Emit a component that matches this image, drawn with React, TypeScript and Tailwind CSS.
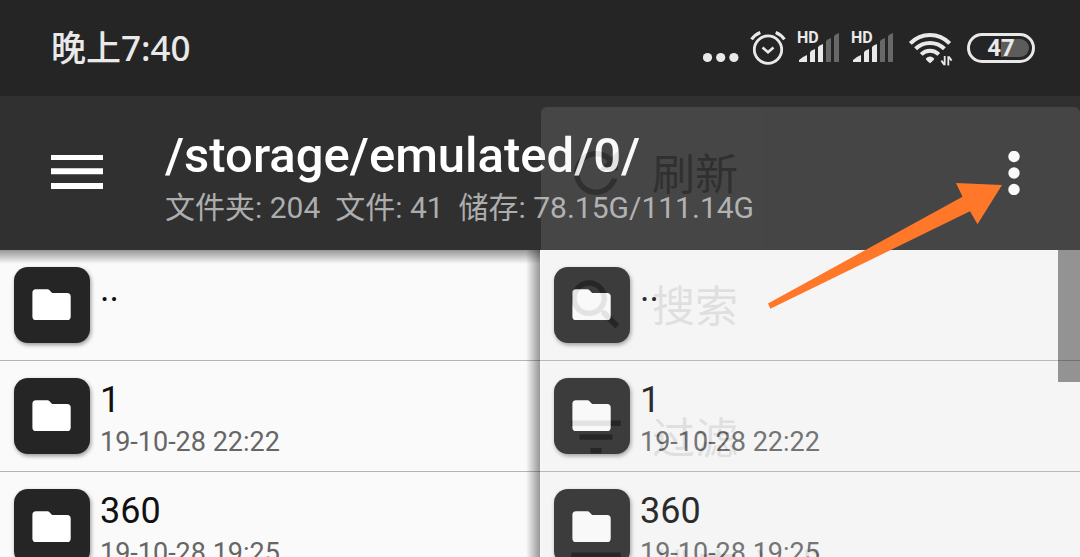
import { useState } from "react";

type FileEntry = {
  name: string;
  date?: string;
};

const entries: FileEntry[] = [
  { name: ".." },
  { name: "1", date: "19-10-28 22:22" },
  { name: "360", date: "19-10-28 19:25" },
];

const menuItems = [
  {
    title: "刷新",
    path: "M17.65 6.35C16.2 4.9 14.21 4 12 4c-4.42 0-7.99 3.58-7.99 8s3.57 8 7.99 8c3.73 0 6.84-2.55 7.73-6h-2.08c-.82 2.33-3.04 4-5.65 4-3.31 0-6-2.69-6-6s2.69-6 6-6c1.66 0 3.14.69 4.22 1.78L13 11h7V4l-2.35 2.35z",
  },
  {
    title: "搜索",
    path: "M15.5 14h-.79l-.28-.27C15.41 12.59 16 11.11 16 9.5 16 5.91 13.09 3 9.5 3S3 5.91 3 9.5 5.91 16 9.5 16c1.61 0 3.09-.59 4.23-1.57l.27.28v.79l5 4.99L20.49 19l-4.99-5zm-6 0C7.01 14 5 11.99 5 9.5S7.01 5 9.5 5 14 7.01 14 9.5 11.99 14 9.5 14z",
  },
  {
    title: "过滤",
    path: "M10 18h4v-2h-4v2zM3 6v2h18V6H3zm3 7h12v-2H6v2z",
  },
  {
    title: "排序方式",
    path: "M3 18h6v-2H3v2zM3 6v2h18V6H3zm0 7h12v-2H3v2z",
  },
];

function SignalIcon() {
  return (
    <div className="relative h-9 w-[43px]">
      <svg className="h-9 w-[43px]" viewBox="0 0 43 36" aria-hidden="true">
        <g fill="#e9e9e9">
          <path d="M2 32v-2q3-3 8-5v7z" />
          <path d="M13 32v-10q2-2 5-3v13z" />
          <path d="M21 32v-15q2-2 5-3v18z" />
        </g>
        <g fill="#686868">
          <path d="M29 32v-21q2-2 5-3v24z" />
          <path d="M37 32v-26q2-2 5-3v29z" />
        </g>
      </svg>
      <span className="absolute top-0 left-0 text-base leading-4 font-bold">
        HD
      </span>
    </div>
  );
}

function StatusBar() {
  return (
    <div className="flex h-24 items-center justify-between bg-[#252525] pr-[45px] pl-[51px] text-[#e9e9e9]">
      <p className="font-['Noto_Sans','Noto_Sans_CJK_SC',sans-serif] text-[35px] leading-10 font-medium">
        晚上7:40
      </p>
      <div className="flex items-center gap-[11px]">
        <svg className="h-9 w-9" viewBox="0 0 36 36" fill="currentColor" aria-hidden="true">
          <circle cx="4.5" cy="27.5" r="4.6" />
          <circle cx="17.7" cy="27.5" r="4.6" />
          <circle cx="30.9" cy="27.5" r="4.6" />
        </svg>
        <svg
          className="h-9 w-9"
          viewBox="0 0 36 36"
          fill="none"
          stroke="currentColor"
          strokeWidth="2.8"
          aria-hidden="true"
        >
          <circle cx="18" cy="19.6" r="13.7" />
          <path d="M12.5 17.5l5.5 4.8 5.5-4.8" strokeWidth="2.6" />
          <path d="M1.6 9.4Q5 4.4 10.3 2.4M34.4 9.4Q31 4.4 25.7 2.4" strokeWidth="3.2" />
        </svg>
        <SignalIcon />
        <SignalIcon />
        <svg className="h-9 w-[51px]" viewBox="0 0 51 36" fill="none" aria-hidden="true">
          <g stroke="currentColor" strokeWidth="4">
            <path d="M5.3 13.3Q13.5 4.9 25 4.9T44.7 13.3" />
            <path d="M10.6 18.8Q16.6 12.9 25 12.9T39.4 18.8" />
            <path d="M16.2 24.4Q20 20.7 25 20.7T33.8 24.4" />
          </g>
          <path
            d="M20.8 28.4q4.2-3.6 8.4 0q0 1.6-4.2 4.8q-4.2-3.2-4.2-4.8z"
            fill="currentColor"
          />
          <path
            d="M39.7 26v9.2M39.3 34.6l-2.9-4M43.3 35.4v-9.2M43.7 26.6l2.9 4"
            stroke="currentColor"
            strokeWidth="1.8"
          />
        </svg>
        <div className="relative flex h-[30px] w-[68px] items-center justify-center rounded-full border-3 border-[#e9e9e9]">
          <div className="absolute inset-y-[3px] right-[3px] w-7 rounded-r-full bg-[#5c5c5c]" />
          <span className="relative text-2xl leading-6 font-bold">47</span>
        </div>
      </div>
    </div>
  );
}

function Toolbar({ onMenuClick }: { onMenuClick: () => void }) {
  return (
    <header className="flex h-[154px] items-center bg-[#303030] pr-[54px] pl-[51px] text-white">
      <button type="button" aria-label="菜单">
        <svg className="h-9 w-[52px]" viewBox="0 0 52 36" fill="currentColor">
          <path d="M0 -1h52v6H0zM0 13.3h52v6H0zM0 28h52v6H0z" />
        </svg>
      </button>
      <div className="ml-[62px] flex-1 pt-2 whitespace-nowrap">
        <h1 className="text-[49px] leading-[62px] font-medium">
          /storage/emulated/0/
        </h1>
        <p className="text-[30px] leading-[42px] whitespace-pre text-[#adadad]">
          文件夹: 204{"  "}文件: 41{"  "}储存: 78.15G/111.14G
        </p>
      </div>
      <button type="button" aria-label="更多选项" onClick={onMenuClick}>
        <svg className="h-11 w-6" viewBox="0 0 24 44" fill="currentColor">
          <circle cx="12" cy="5.5" r="5.7" />
          <circle cx="12" cy="22" r="5.7" />
          <circle cx="12" cy="38.5" r="5.7" />
        </svg>
      </button>
    </header>
  );
}

function FileRow({ name, date }: FileEntry) {
  return (
    <li className="flex h-[111px] items-start border-b border-[#b5b5b5] px-[14px] pt-[17px]">
      <div className="size-[76px] shrink-0 rounded-[14px] bg-[#252525] shadow-[1px_2px_4px_rgba(0,0,0,0.4)]">
        <svg className="size-[76px]" viewBox="0 0 76 76" fill="#fff" aria-hidden="true">
          <path d="M22 22.3h11.5q1.2 0 2 .9l2.6 2.9h15q3.6 0 3.6 3.6v19.7q0 3.6-3.6 3.6H22q-3.6 0-3.6-3.6V25.9q0-3.6 3.6-3.6z" />
        </svg>
      </div>
      <div className="ml-[10px]">
        <p className="text-4xl leading-11 text-[#111]">{name}</p>
        {date && <p className="text-[27px] leading-10 text-[#666]">{date}</p>}
      </div>
    </li>
  );
}

function FileList() {
  return (
    <ul>
      {entries.map((entry) => (
        <FileRow key={entry.name} {...entry} />
      ))}
    </ul>
  );
}

function OverflowMenu() {
  return (
    <div className="absolute top-[107px] right-0 w-[calc(50%-1px)] rounded-md bg-[#d8d8d8] text-[#303030] opacity-[0.13]">
      {menuItems.map((item) => (
        <button
          key={item.title}
          type="button"
          className="flex h-[132px] w-full items-center gap-[23px] pl-[22px] text-[43px]"
        >
          <svg className="size-[66px]" viewBox="0 0 24 24" fill="currentColor" aria-hidden="true">
            <path d={item.path} />
          </svg>
          <span className="pt-1">{item.title}</span>
        </button>
      ))}
    </div>
  );
}

export default function App() {
  const [menuOpen, setMenuOpen] = useState(true);

  return (
    <div className="relative h-screen overflow-hidden bg-[#fafafa] font-['Roboto','Noto_Sans_CJK_SC',sans-serif]">
      <StatusBar />
      <Toolbar onMenuClick={() => setMenuOpen(!menuOpen)} />
      <main className="grid grid-cols-2">
        <section className="relative">
          <FileList />
          <div className="pointer-events-none absolute inset-x-0 top-0 h-[14px] bg-linear-to-b from-black/40 to-transparent" />
          <div className="pointer-events-none absolute inset-y-0 right-0 w-[14px] bg-linear-to-l from-black/40 to-transparent" />
        </section>
        <section className="relative">
          <FileList />
          {/* scroll thumb */}
          <div className="absolute top-0 right-0 h-[132px] w-[22px] bg-black/45" />
        </section>
      </main>
      {menuOpen && <OverflowMenu />}
      <svg
        className="pointer-events-none absolute top-[183px] right-[78px] h-[126px] w-[234px]"
        viewBox="0 0 234 126"
        fill="#ff7729"
        aria-hidden="true"
      >
        <path d="M0 120.5L194.5 13.7L188 0L234 2L209.5 41.2L202 28.3L2.3 125.8z" />
      </svg>
    </div>
  );
}
